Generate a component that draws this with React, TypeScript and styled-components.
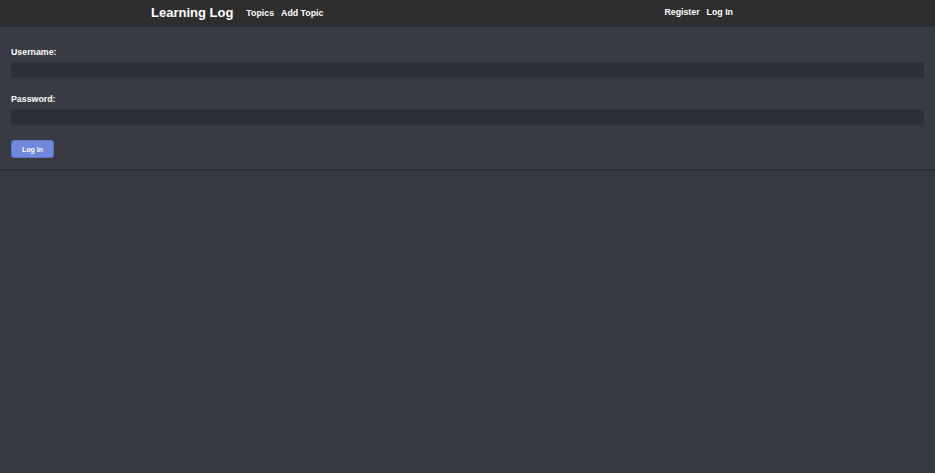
import React from "react";
import styled, { createGlobalStyle } from "styled-components";

const GlobalStyle = createGlobalStyle`
  html, body {
    margin: 0;
    padding: 0;
    background: #363940;
    font-family: "Liberation Sans", Arial, sans-serif;
    color: #ffffff;
  }
`;

const Page = styled.div`
  min-height: 473px;
  background: #363940;
`;

const Navbar = styled.nav`
  height: 25px;
  background: #2e2e2e;
  box-shadow: 0 1px 2px rgba(0, 0, 0, 0.45);
  position: relative;
  z-index: 1;
`;

const NavInner = styled.div`
  width: 633px;
  height: 100%;
  margin: 0 auto;
  display: flex;
  align-items: center;
`;

const Brand = styled.a`
  font-size: 13px;
  font-weight: bold;
  color: #ffffff;
  text-decoration: none;
  margin-right: 13px;
  margin-top: -1px;
`;

const NavList = styled.div<{ $right?: boolean }>`
  display: flex;
  gap: 7px;
  margin-left: ${(p) => (p.$right ? "auto" : "0")};
  margin-right: ${(p) => (p.$right ? "51px" : "0")};
  margin-top: ${(p) => (p.$right ? "-2px" : "1px")};
`;

const NavLink = styled.a`
  font-size: 8.8px;
  font-weight: bold;
  color: #ffffff;
  text-decoration: none;
`;

const Card = styled.form`
  background: #383b43;
  padding: 22px 11px 11px;
  display: flex;
  flex-direction: column;
  align-items: flex-start;
  box-shadow: 0 1px 2px rgba(0, 0, 0, 0.35);
`;

const Label = styled.label<{ $first?: boolean }>`
  font-size: 8.8px;
  font-weight: bold;
  line-height: 11px;
  margin-top: ${(p) => (p.$first ? "0" : "16px")};
`;

const Input = styled.input`
  box-sizing: border-box;
  width: 100%;
  height: 16px;
  margin-top: 4px;
  border: 1px solid #2f3239;
  background: #2c2f36;
  color: #ffffff;
  outline: none;
  padding: 0 4px;
`;

const Button = styled.button`
  margin-top: 15px;
  width: 43px;
  height: 18px;
  border: 1px solid #5f74c4;
  border-radius: 3px;
  background: #7087dc;
  color: #ffffff;
  font-family: "Liberation Sans", Arial, sans-serif;
  font-size: 7px;
  font-weight: bold;
  padding: 0;
  cursor: pointer;
`;

export default function App() {
  return (
    <Page>
      <GlobalStyle />
      <Navbar>
        <NavInner>
          <Brand href="#">Learning Log</Brand>
          <NavList>
            <NavLink href="#">Topics</NavLink>
            <NavLink href="#">Add Topic</NavLink>
          </NavList>
          <NavList $right>
            <NavLink href="#">Register</NavLink>
            <NavLink href="#">Log In</NavLink>
          </NavList>
        </NavInner>
      </Navbar>
      <Card onSubmit={(e) => e.preventDefault()}>
        <Label $first htmlFor="username">Username:</Label>
        <Input id="username" type="text" />
        <Label htmlFor="password">Password:</Label>
        <Input id="password" type="password" />
        <Button type="submit">Log In</Button>
      </Card>
    </Page>
  );
}
